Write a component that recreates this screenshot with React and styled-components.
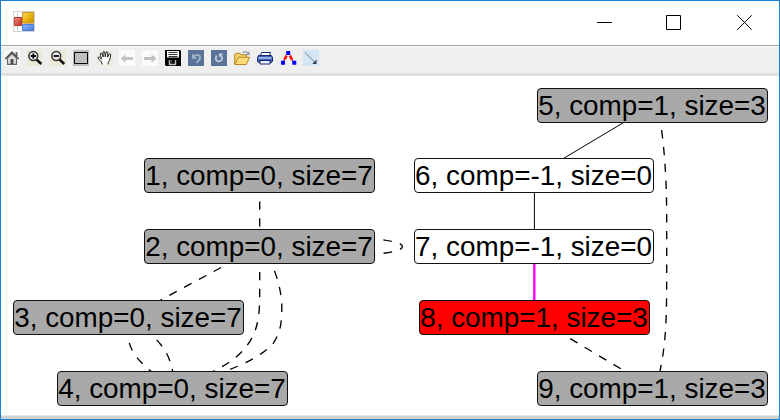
import React from "react";
import styled, { createGlobalStyle } from "styled-components";

const GlobalStyle = createGlobalStyle`
  *, *::before, *::after { box-sizing: border-box; }
  html, body { margin: 0; background: #fff; }
  svg { display: block; flex: none; }
`;

const Window = styled.main`
  width: 780px;
  height: 420px;
  display: flex;
  flex-direction: column;
  overflow: hidden;
  border: 1px solid #1a80d5;
  background: #fff;
  font-family: "Liberation Sans", Arial, sans-serif;
`;

const TitleBar = styled.header`
  flex: 0 0 44px;
  display: flex;
  align-items: flex-start;
  justify-content: space-between;
  padding: 10px 27px 0 12px;
`;

const WindowControls = styled.div`
  display: flex;
  gap: 54px;
  padding-top: 4px;
`;

const ControlButton = styled.button`
  width: ${({ $wide }) => ($wide ? 17 : 15)}px;
  height: 15px;
  padding: 0;
  border: 0;
  background: none;
  display: flex;
  justify-content: flex-end;
`;

const Toolbar = styled.nav`
  flex: 0 0 31px;
  display: flex;
  align-items: flex-start;
  gap: 7px;
  padding: 4px 3px 0;
  background: #efefef;
  border-top: 1px solid #a0a0a0;
  border-bottom: 3px solid #dfdfdf;
  box-shadow: inset 0 1px #fff;
`;

const ToolButton = styled.button`
  flex: 0 0 16px;
  width: 16px;
  height: 16px;
  padding: 0;
  border: 0;
  background: ${({ $bg }) => $bg || "transparent"};
  margin-left: ${({ $shift }) => $shift || 0}px;
`;

const Canvas = styled.section`
  flex: 1;
  position: relative;
  overflow: hidden;
  background: #fff;
`;

const StatusStrip = styled.footer`
  flex: 0 0 4px;
  background: #d2d2d2;
  border-top: 1px solid #e9e9e9;
`;

const GraphNode = styled.div`
  position: absolute;
  left: ${({ $x }) => $x - 1}px;
  top: ${({ $y }) => $y - 76}px;
  width: ${({ $w }) => $w}px;
  height: 35px;
  border: 1px solid #111;
  border-radius: 4px;
  background: ${({ $fill }) => $fill};
  color: #000;
  font-size: 27.85px;
  line-height: 33px;
  text-align: center;
  text-indent: -1px;
  white-space: pre;
`;

const GRAY = "#a9a9a9";

const nodes = [
  { label: "1, comp=0, size=7", x: 144, y: 158, w: 231, fill: GRAY },
  { label: "2, comp=0, size=7", x: 144, y: 229, w: 231, fill: GRAY },
  { label: "3, comp=0, size=7", x: 13, y: 300, w: 231, fill: GRAY },
  { label: "4, comp=0, size=7", x: 57, y: 371, w: 231, fill: GRAY },
  { label: "5, comp=1, size=3", x: 537, y: 88, w: 231, fill: GRAY },
  { label: "6, comp=-1, size=0", x: 414, y: 158, w: 240, fill: "#fff" },
  { label: "7, comp=-1, size=0", x: 414, y: 229, w: 240, fill: "#fff" },
  { label: "8, comp=1, size=3", x: 419, y: 300, w: 231, fill: "#f00" },
  { label: "9, comp=1, size=3", x: 537, y: 371, w: 231, fill: GRAY },
];

const dashedEdges = [
  "M259.7 193V229",
  "M228.5 263.5L160 300.5",
  "M259.7 263.5V296C259.7 313 258 327 251.7 338.3C243.5 353 230 363.5 213 371.3",
  "M271.5 263C277.5 278 281.8 292 281.8 308C281.8 326 279.5 333 273.7 342.7C264 354 247 363.5 223 372",
  "M127.7 334.5C129.5 349 135 358 151 371.3",
  "M150.5 334C163 345 170 356 172.8 372",
  "M375 238.4C385 240.2 392 241.2 398 242.8Q407 246.6 398 250.4C392 252.2 385 253 375 254.5",
  "M660.5 122C664 146 666.7 176 666.7 218V272C666.7 320 666 342 660 371",
  "M563 334.3L625 371.3",
];

function Edges() {
  return (
    <svg width="778" height="339" viewBox="1 76 778 339" fill="none" stroke="#000">
      <g strokeWidth="1.35" strokeDasharray="8.4 8.4" strokeDashoffset="8.4">
        {dashedEdges.map((d) => (
          <path key={d} d={d} />
        ))}
      </g>
      <path d="M624.5 122L562.5 159M534.4 193V229" strokeWidth="1" />
      <path d="M534.3 263V301" stroke="#f0f" strokeWidth="2.4" />
    </svg>
  );
}

function AppIcon() {
  return (
    <svg width="22" height="22" viewBox="0 0 22 22" aria-hidden="true">
      <defs>
        <linearGradient id="gold" x1="0" y1="0" x2="1" y2="1">
          <stop stopColor="#fbd75c" />
          <stop offset=".6" stopColor="#e9ab0b" />
          <stop offset="1" stopColor="#c98b00" />
        </linearGradient>
        <linearGradient id="red" x1="0" y1="0" x2="1" y2="1">
          <stop stopColor="#ef8f80" />
          <stop offset="1" stopColor="#c42b23" />
        </linearGradient>
        <linearGradient id="blue" x1="0" y1="0" x2="1" y2="1">
          <stop stopColor="#8db9fb" />
          <stop offset="1" stopColor="#3f76db" />
        </linearGradient>
      </defs>
      <path d="M0 0h22v21H0z" fill="#d3d3d3" />
      <path d="M1 1h3v5H1zM5 1h4v5H5zM1 15h3v5H1zM5 15h4v5H5z" fill="#fff" />
      <path d="M1.5 6.5h7v8h-7z" fill="url(#red)" stroke="#bc382f" />
      <path d="M9.5 1.5h11v10.5h-11z" fill="url(#gold)" stroke="#c99620" />
      <path d="M9.5 13.5h11v6h-11z" fill="url(#blue)" stroke="#4b7fd9" />
    </svg>
  );
}

function Magnifier({ plus }) {
  return (
    <>
      <path d="M9.5 9.5l4.8 4.5" stroke="#111" strokeWidth="2.4" />
      <circle cx="6.3" cy="6" r="4.4" fill="#e8e8e8" stroke="#333" strokeWidth="1.5" />
      <path d={plus ? "M3.7 6h5.2M6.3 3.4v5.2" : "M3.7 6h5.2"} stroke="#000" strokeWidth="1.8" />
    </>
  );
}

const tools = [
  {
    name: "Home",
    bg: "#f8f8f8",
    art: (
      <>
        <path d="M11.5 2h2v4h-2z" fill="#666" />
        <path d="M3.5 8L8 3.5 12.5 8v6.4h-9z" fill="#ddd" stroke="#666" strokeWidth="1.2" />
        <path d="M1.2 9L8 2.2 14.8 9" stroke="#555" strokeWidth="1.7" />
        <path d="M6.5 9h3v5.5h-3z" fill="#505050" />
      </>
    ),
  },
  { name: "Zoom in", bg: "#ece9d8", art: <Magnifier plus /> },
  { name: "Zoom out", bg: "#ece9d8", art: <Magnifier /> },
  {
    name: "Window zoom",
    bg: "#c0c0c0",
    art: <path d="M1.5 2.5h13v11h-13z" stroke="#000" />,
  },
  {
    name: "Pan",
    bg: "#f0eee2",
    shift: 1,
    art: (
      <path
        d="M5.2 14.5L4.5 12 1 8.2Q.7 6.8 2.2 7L4.5 9 3.2 3.8Q4 2.4 5 3.6L6.3 7 6 2Q7 .8 7.8 2L8.2 6.8 9.2 2Q10.4 1.2 10.9 2.7L10.5 7.2 12.2 4Q13.5 3.5 13.8 4.8L12.7 10.3 11.2 12.5V14.5"
        fill="#fff"
        stroke="#222"
        strokeWidth="1"
      />
    ),
  },
  {
    name: "Back",
    bg: "#fbfbfb",
    shift: -1,
    art: <path d="M1.5 8.5L6.4 4.2V7H14v3H6.4v2.8z" fill="#c2c2c2" />,
  },
  {
    name: "Forward",
    bg: "#fbfbfb",
    art: <path d="M14.5 8.5L9.6 4.2V7H2v3h7.6v2.8z" fill="#c2c2c2" />,
  },
  {
    name: "Save",
    art: (
      <>
        <path d="M0 0h15l1 1v15H1l-1-1z" fill="#000" />
        <path d="M2 1h12v6.5H2z" fill="#fff" />
        <path d="M3.5 2.5h9M3.5 4.5h9M3.5 6.5h9" stroke="#000" strokeWidth=".8" />
        <path d="M4.5 10v4.5h6V10" stroke="#bbb" strokeWidth="1.5" />
        <path d="M6.5 10v3" stroke="#555" />
      </>
    ),
  },
  {
    name: "Undo",
    bg: "#5a7399",
    art: (
      <>
        <path d="M6 6.5Q8.5 4 10.8 5.2Q13 7 11.5 9.6Q10.5 11.2 8 12.6" stroke="#a3b4cb" strokeWidth="1.8" />
        <path d="M4 3.5v5.3h5.2z" fill="#a3b4cb" />
      </>
    ),
  },
  {
    name: "Redo",
    bg: "#5a7399",
    art: (
      <>
        <path d="M5.6 5.5Q4 8 5.3 10.2Q7.3 12.3 9.8 10.8Q11.8 9 10.6 6.2L9.5 5" stroke="#c0cddd" strokeWidth="1.7" />
        <path d="M7.8 3.5h4.5L8 7.6z" fill="#c0cddd" />
      </>
    ),
  },
  {
    name: "Open",
    art: (
      <>
        <path d="M.7 14.5v-10L2 3.3h4l1.2 1.5h5.3v3" fill="#f5d070" stroke="#b38320" />
        <path d="M.8 14.5L4.5 7.3h11.2l-3.5 7.2z" fill="#ffdc78" stroke="#b78620" />
        <path d="M8.5 3Q11 .7 13.5 2.7" stroke="#7e91a8" strokeWidth="1.1" />
        <path d="M15.5 1v4h-4z" fill="#8295ad" />
      </>
    ),
  },
  {
    name: "Print",
    art: (
      <>
        <path d="M3.5 5.5l1-3h9l-1 3" fill="#fff" stroke="#162b72" />
        <path d="M1.5 5.5h13l1 2v4l-1.5 1H2l-1.5-1v-4z" fill="#4062b3" stroke="#142a72" />
        <path d="M1.5 8h13" stroke="#b9d1f6" strokeWidth="1.4" />
        <path d="M3 10.5h10v3.5H3z" fill="#eef4ff" stroke="#142a72" />
      </>
    ),
  },
  {
    name: "Layout",
    shift: 1,
    art: (
      <>
        <path d="M5.5 5.5L3.6 9.5M9 5.5l2 4.2" stroke="#f00" strokeWidth="2.5" />
        <path d="M3.5 9.5L2.5 11.5M11 9.5l1.2 2" stroke="#f00" strokeWidth="1.2" />
        <path d="M5.2 1h4v4h-4zM0 10.8h4v4H0zM11.3 10.8h4v4h-4z" fill="#00f" />
      </>
    ),
  },
  {
    name: "Insert edge",
    shift: -1,
    bg: "#d4e6f6",
    art: (
      <>
        <path d="M2 2.5l10 10" stroke="#6d7b88" />
        <path d="M13.5 14H9.2l4.3-4.5z" fill="#34424e" />
      </>
    ),
  },
];

export default function App() {
  return (
    <Window>
      <GlobalStyle />
      <TitleBar>
        <AppIcon />
        <WindowControls>
          <ControlButton aria-label="Minimize">
            <svg width="15" height="15" shapeRendering="crispEdges">
              <path d="M0 7h15v1H0z" />
            </svg>
          </ControlButton>
          <ControlButton aria-label="Maximize">
            <svg width="15" height="15" fill="none" stroke="#000">
              <path d="M.5.5h14v14H.5z" />
            </svg>
          </ControlButton>
          <ControlButton aria-label="Close" $wide>
            <svg width="15" height="15" stroke="#000" strokeWidth="1">
              <path d="M.3.3l14.4 14.4M14.7.3L.3 14.7" />
            </svg>
          </ControlButton>
        </WindowControls>
      </TitleBar>
      <Toolbar>
        {tools.map((tool) => (
          <ToolButton key={tool.name} aria-label={tool.name} $bg={tool.bg} $shift={tool.shift}>
            <svg width="16" height="16" viewBox="0 0 16 16" fill="none">
              {tool.art}
            </svg>
          </ToolButton>
        ))}
      </Toolbar>
      <Canvas>
        <Edges />
        {nodes.map((node) => (
          <GraphNode key={node.label} $x={node.x} $y={node.y} $w={node.w} $fill={node.fill}>
            {node.label}
          </GraphNode>
        ))}
      </Canvas>
      <StatusStrip />
    </Window>
  );
}
